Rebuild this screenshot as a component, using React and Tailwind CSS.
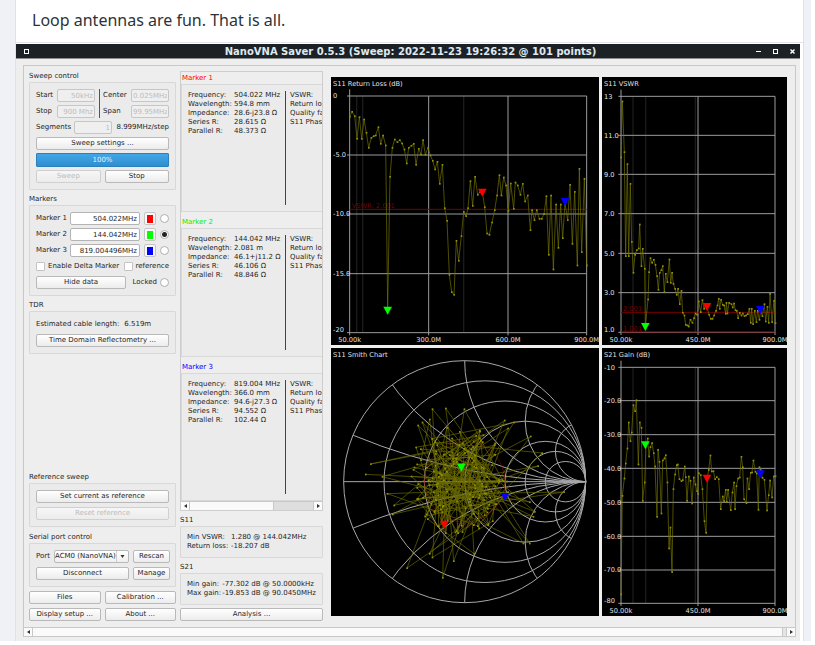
import React from "react";

function Button({ children, className = "", ...rest }) {
  return (
    <button
      className={`flex h-[13px] items-center justify-center rounded-[2px] border border-[#b9b9b9] bg-gradient-to-b from-white to-[#ececec] whitespace-nowrap disabled:border-[#d0d0d0] disabled:from-[#f6f6f6] disabled:text-[#bcbcbc] ${className}`}
      {...rest}
    >
      {children}
    </button>
  );
}

function Field({ className = "", ...rest }) {
  return (
    <input
      type="text"
      className={`h-[13px] w-full min-w-0 rounded-[2px] border border-[#b4b4b4] bg-white px-[2px] text-right disabled:border-[#c6c6c6] disabled:bg-[#efefef] disabled:px-px disabled:text-[#bcbcbc] ${className}`}
      {...rest}
    />
  );
}

function Radio(props) {
  return (
    <input
      type="radio"
      className="size-[9px] shrink-0 appearance-none rounded-full border border-[#b0b0b0] bg-white checked:bg-[radial-gradient(circle,#222_0_2px,#fff_3px)]"
      {...props}
    />
  );
}

function Check(props) {
  return (
    <input
      type="checkbox"
      className="size-[9px] shrink-0 appearance-none rounded-[1px] border border-[#c4c4c4] bg-white checked:bg-[#333]"
      {...props}
    />
  );
}

function Group({ title, titleClass = "", className = "", children }) {
  return (
    <section className="flex flex-col">
      <h2 className={`h-3 leading-3 ${titleClass}`}>{title}</h2>
      <div className={`flex flex-col gap-[3px] rounded-[1px] border border-[#d8d8d8] bg-[#ebebeb] p-[6px] ${className}`}>
        {children}
      </div>
    </section>
  );
}

const markers = [
  { id: 1, freq: "504.022MHz", chip: "bg-[#ff0000]", title: "text-[#ff0000]",
    rows: [["Frequency:", "504.022 MHz"], ["Wavelength:", "594.8 mm"], ["Impedance:", "28.6-j23.8 Ω"], ["Series R:", "28.615 Ω"], ["Parallel R:", "48.373 Ω"]] },
  { id: 2, freq: "144.042MHz", chip: "bg-[#00ff00]", title: "text-[#00f000]",
    rows: [["Frequency:", "144.042 MHz"], ["Wavelength:", "2.081 m"], ["Impedance:", "46.1+j11.2 Ω"], ["Series R:", "46.106 Ω"], ["Parallel R:", "48.846 Ω"]] },
  { id: 3, freq: "819.004496MHz", chip: "bg-[#0000ff]", title: "text-[#0000ff]",
    rows: [["Frequency:", "819.004 MHz"], ["Wavelength:", "366.0 mm"], ["Impedance:", "94.6-j27.3 Ω"], ["Series R:", "94.552 Ω"], ["Parallel R:", "102.44 Ω"]] },
];

function Controls() {
  return (
    <div className="flex w-[147px] shrink-0 flex-col justify-between">
      <div className="flex flex-col gap-[3px]">
        <Group title="Sweep control">
          <div className="grid grid-cols-[21px_1fr_8px_28px_1fr] items-center gap-y-[3px]">
            <label htmlFor="start">Start</label>
            <Field id="start" defaultValue="50kHz" disabled />
            <span className="row-span-2 w-px justify-self-center self-stretch bg-[#555]" />
            <label htmlFor="center">Center</label>
            <Field id="center" defaultValue="0.025MHz" disabled />
            <label htmlFor="stop">Stop</label>
            <Field id="stop" defaultValue="900 Mhz" disabled />
            <label htmlFor="span">Span</label>
            <Field id="span" defaultValue="99.95MHz" disabled />
          </div>
          <div className="flex items-center justify-between">
            <label htmlFor="segments" className="w-[38px]">Segments</label>
            <div className="w-[38px]"><Field id="segments" defaultValue="1" disabled /></div>
            <span className="flex w-[57px] justify-end whitespace-nowrap">8.999MHz/step</span>
          </div>
          <Button>Sweep settings ...</Button>
          <div role="progressbar" aria-label="Sweep progress" aria-valuenow={100} className="flex h-[14px] items-center justify-center rounded-[1px] border border-[#2a7fbd] bg-gradient-to-b from-[#42a6e6] to-[#2e8fd0] text-[#e4f2fc]">
            100%
          </div>
          <div className="grid grid-cols-2 gap-1">
            <Button disabled>Sweep</Button>
            <Button>Stop</Button>
          </div>
        </Group>

        <Group title="Markers">
          {markers.map((m) => (
            <div key={m.id} className="flex items-center gap-1">
              <label htmlFor={`marker-${m.id}`} className="w-[30px] shrink-0 whitespace-nowrap">Marker {m.id}</label>
              <Field id={`marker-${m.id}`} defaultValue={m.freq} />
              <button aria-label={`Marker ${m.id} colour`} className="flex h-[13px] w-[12px] shrink-0 items-center justify-center rounded-[2px] border border-[#c4c4c4] bg-[#f8f8f8]">
                <span className={`h-[8px] w-[6px] ${m.chip}`} />
              </button>
              <Radio name="active-marker" aria-label={`Select marker ${m.id}`} defaultChecked={m.id === 2} />
            </div>
          ))}
          <div className="flex h-[13px] items-center justify-between">
            <label className="flex items-center gap-[3px] whitespace-nowrap"><Check />Enable Delta Marker</label>
            <label className="flex items-center gap-[3px]"><Check />reference</label>
          </div>
          <div className="flex items-center justify-between">
            <Button className="w-[90px]">Hide data</Button>
            <label className="flex items-center gap-[3px]">Locked<Radio name="locked" /></label>
          </div>
        </Group>

        <Group title="TDR">
          <p className="flex h-[13px] items-center gap-[5px]"><span>Estimated cable length:</span><span>6.519m</span></p>
          <Button>Time Domain Reflectometry ...</Button>
        </Group>
      </div>

      <div className="flex flex-col gap-1">
        <Group title="Reference sweep">
          <div className="grid gap-1">
            <Button>Set current as reference</Button>
            <Button disabled>Reset reference</Button>
          </div>
        </Group>
        <Group title="Serial port control">
          <div className="grid grid-cols-[14px_1fr_37px] items-center gap-1">
            <label htmlFor="port">Port</label>
            <div className="flex h-[13px] items-center rounded-[2px] border border-[#b9b9b9] bg-gradient-to-b from-white to-[#efefef]">
              <select id="port" className="min-w-0 flex-1 appearance-none bg-transparent leading-[11px]">
                <option>ACM0 (NanoVNA)</option>
              </select>
              <span className="flex h-full w-3 items-center justify-center border-l border-[#cfcfcf]">
                <svg viewBox="0 0 4 3" className="h-[3px] w-[5px]"><path d="M0 0H4L2 3Z" fill="#333" /></svg>
              </span>
            </div>
            <Button>Rescan</Button>
            <Button className="col-span-2">Disconnect</Button>
            <Button>Manage</Button>
          </div>
        </Group>
        <div className="grid grid-cols-2 gap-1">
          <Button>Files</Button>
          <Button>Calibration ...</Button>
          <Button>Display setup ...</Button>
          <Button>About ...</Button>
        </div>
      </div>
    </div>
  );
}

function Arrow({ left }) {
  return (
    <button aria-label={left ? "Scroll left" : "Scroll right"} className={`flex w-[9px] shrink-0 items-center justify-center border-[#c8c8c8] bg-[#fbfbfb] ${left ? "border-r" : "border-l"}`}>
      <svg viewBox="0 0 3 4" className="h-[4px] w-[3px]"><path d={left ? "M3 0V4L0 2Z" : "M0 0V4L3 2Z"} fill="#333" /></svg>
    </button>
  );
}

function Readout({ rows, col }) {
  return (
    <table className="leading-[9px] whitespace-nowrap">
      <tbody>
        {rows.map(([k, v]) => (
          <tr key={k}><th scope="row" className={`p-0 text-left font-normal ${col}`}>{k}</th><td className="p-0">{v}</td></tr>
        ))}
      </tbody>
    </table>
  );
}

function MarkerPanel() {
  return (
    <div className="flex w-[143px] shrink-0 flex-col gap-[3px] pt-px">
      <div className="flex flex-1 flex-col overflow-hidden border border-[#cdcdcd]">
        <div className="flex flex-1 flex-col gap-1">
          {markers.map((m) => (
            <section key={m.id} className="flex flex-1 flex-col">
              <h2 className={`h-3 pl-px leading-3 ${m.title}`}>Marker {m.id}</h2>
              <div className="flex flex-1 overflow-hidden border-y border-l border-[#d8d8d8] bg-[#ebebeb] py-[6px] pl-[6px] leading-[9px] whitespace-nowrap">
                <table className="w-[97px] shrink-0 self-start">
                  <tbody>
                    {m.rows.map(([k, v]) => (
                      <tr key={k}><th scope="row" className="w-[46px] p-0 text-left font-normal">{k}</th><td className="p-0">{v}</td></tr>
                    ))}
                  </tbody>
                </table>
                <span className="mr-1 w-px shrink-0 bg-[#444]" />
                <div>
                  <p>VSWR:</p><p>Return loss:</p><p>Quality factor:</p><p>S11 Phase:</p>
                </div>
              </div>
            </section>
          ))}
        </div>
        <div className="flex h-[9px] shrink-0 border-t border-[#c8c8c8] bg-[#dedede]">
          <Arrow left />
          <div className="w-[84px] border-r border-[#c8c8c8] bg-[#fafafa]" />
          <div className="flex-1" />
          <Arrow />
        </div>
      </div>
      <Group title="S11">
        <Readout rows={[["Min VSWR:", "1.280 @ 144.042MHz"], ["Return loss:", "-18.207 dB"]]} col="w-[44px]" />
      </Group>
      <Group title="S21">
        <Readout rows={[["Min gain:", "-77.302 dB @ 50.0000kHz"], ["Max gain:", "-19.853 dB @ 90.0450MHz"]]} col="w-[38px]" />
      </Group>
      <Button>Analysis ...</Button>
    </div>
  );
}

const returnLoss = "65,124 72,109 80,122 87,190 94,125 101,190 108,132 115,172 122,217 130,187 137,182 143,180 151,155 158,205 165,180 173,210 179,700 186,304 193,217 200,192 208,200 215,194 222,204 229,222 236,264 242,217 250,211 257,205 264,268 272,220 279,237 285,194 292,238 300,217 307,240 314,256 321,282 328,259 335,325 343,268 350,398 357,436 364,598 371,650 378,658 385,496 392,556 400,482 407,409 414,422 420,398 427,317 434,391 441,304 449,358 456,350 463,350 470,395 477,474 484,478 492,441 500,404 507,360 514,299 520,360 527,306 534,330 541,406 548,324 557,400 562,321 569,330 577,358 584,325 591,378 599,360 607,464 612,404 619,434 626,404 634,430 641,430 648,416 655,362 662,538 669,360 676,582 684,387 691,517 698,387 704,488 711,385 719,434 726,328 733,505 740,349 748,570 754,280 761,530 769,310 776,570";
const vswr = "69,246 73,78 79,230 83,542 88,266 92,542 97,325 101,499 106,592 111,538 116,524 122,519 125,447 130,572 134,520 140,580 142,755 150,672 153,590 157,548 162,562 167,553 172,568 177,602 181,643 185,592 190,584 194,572 199,650 203,595 208,620 214,552 218,622 222,592 226,625 231,640 236,658 240,640 245,686 250,646 254,712 259,720 263,748 268,750 272,753 277,733 283,742 288,728 292,714 297,718 302,678 308,710 313,674 318,700 322,690 327,695 333,718 338,730 343,730 348,720 354,706 358,690 362,670 365,700 369,673 374,688 378,690 383,715 385,682 388,714 393,682 400,686 404,696 408,684 412,704 416,706 420,728 425,712 430,720 434,714 439,722 444,720 449,716 454,700 458,742 461,700 465,746 470,706 475,740 479,706 484,733 488,706 493,722 499,686 503,738 508,694 512,742 516,655 522,740 528,676 532,743";
const gain = "69,748 73,452 79,400 83,355 88,310 92,232 97,288 101,262 106,180 111,198 115,165 121,358 125,232 130,248 134,467 140,412 144,300 149,280 153,334 157,306 162,294 167,324 171,364 177,515 180,314 184,350 190,505 194,346 199,340 203,330 208,412 213,610 217,547 222,681 226,432 231,388 236,360 239,358 244,402 250,408 254,405 260,364 263,396 267,467 272,394 277,407 282,475 287,397 292,418 297,438 300,446 302,384 308,390 313,432 319,528 324,563 328,400 332,374 337,331 341,379 346,378 351,402 356,396 362,402 368,492 374,454 378,468 383,434 386,470 390,434 398,495 403,442 408,412 411,492 415,423 420,400 425,397 430,335 434,366 438,462 445,474 448,400 453,432 458,383 462,382 466,346 472,380 476,385 481,494 484,366 488,375 493,398 499,404 507,496 512,450 516,406 522,457 527,394 532,393";

function Trace({ points, line = "#767600", width = 2 }) {
  return (
    <g>
      <polyline points={points} fill="none" stroke={line} strokeWidth={width} />
      {points.split(" ").map((p, i) => {
        const [x, y] = p.split(",").map(Number);
        return <rect key={i} x={x - 2} y={y - 2} width="5" height="5" fill="#929200" />;
      })}
    </g>
  );
}

function Tip({ x, y, color }) {
  return <path d={`M${x - 13} ${y - 24}h26l-13 24z`} fill={color} />;
}

function Chart({ title, box, left, ys, xs, bands, points, tips, children }) {
  const [bx, by] = box.split(" ").map(Number);
  const top = ys[0][0];
  const bottom = ys[ys.length - 1][0];
  const right = xs[xs.length - 1][0];
  return (
    <svg viewBox={box} className="block h-auto w-full bg-black font-['DejaVu_Sans',sans-serif] text-[20px]" role="img" aria-label={title}>
      {bands.map((x) => <path key={x} d={`M${x} ${top}V${bottom}`} stroke="#1b1b1b" strokeWidth="4" />)}
      <g stroke="#9c9c9e" strokeWidth="3">
        {ys.map(([y]) => <path key={y} d={`M${left - 8} ${y}H${right}`} />)}
        {xs.map(([x], i) => <path key={x} d={`M${x} ${i === 0 ? top - 20 : top}V${bottom + 8}`} />)}
      </g>
      {children}
      <Trace points={points} />
      {tips.map((t) => <Tip key={t[2]} x={t[0]} y={t[1]} color={t[2]} />)}
      <g fill="#e4e4e4">
        <text x={bx + 6} y={by + 27}>{title}</text>
        {ys.map(([y, label], i) => <text key={label} x={bx + 6} y={i === ys.length - 1 ? y - 1 : y + 7}>{label}</text>)}
        {xs.map(([x, label]) => <text key={label} x={x} y={bottom + 28} textAnchor="middle">{label}</text>)}
      </g>
    </svg>
  );
}

const outliers = [[113, 388], [237, 669], [620, 500], [344, 698], [313, 400], [128, 357], [455, 280], [178, 446], [530, 226], [194, 508], [708, 441], [480, 540], [586, 595], [455, 256], [605, 595], [409, 192], [313, 637], [313, 192], [500, 300], [642, 324], [198, 481], [608, 274], [163, 395], [377, 648], [353, 190], [438, 626], [558, 232], [305, 626], [270, 241], [630, 363], [264, 307], [605, 471], [283, 232], [616, 515], [305, 223], [540, 250]];

function smithPoints() {
  let seed = 29;
  const rnd = () => (seed = (seed * 16807) % 2147483647) / 2147483647;
  const out = [];
  for (let i = 0; i < 144; i += 1) {
    if (i % 4 === 0 && i / 4 < outliers.length) out.push(outliers[i / 4].join(","));
    const a = i * 2.1 + rnd() * 2.4;
    const r = 45 + rnd() * 105;
    out.push(`${Math.round(396 + r * Math.cos(a))},${Math.round(408 + r * 1.12 * Math.sin(a))}`);
  }
  return out.join(" ");
}
const smith = smithPoints();

function SmithChart() {
  const R = 363;
  const c = 410;
  const e = c + R;
  return (
    <svg viewBox="9 9 804 804" className="block h-auto w-full bg-black font-['DejaVu_Sans',sans-serif] text-[20px]" role="img" aria-label="S11 Smith Chart">
      <clipPath id="unit"><circle cx={c} cy={c} r={R} /></clipPath>
      <g fill="none" stroke="#a8a8aa" strokeWidth="3">
        <circle cx={c} cy={c} r={R} />
        <path d={`M${c - R} ${c}H${e}`} />
        {[0.2, 0.5, 1, 2, 3, 5].map((r) => <circle key={r} cx={e - R / (1 + r)} cy={c} r={R / (1 + r)} />)}
        <g clipPath="url(#unit)">
          {[0.2, 0.5, 1, 2, 4].map((x) => (
            <g key={x}>
              <circle cx={e} cy={c - R / x} r={R / x} />
              <circle cx={e} cy={c + R / x} r={R / x} />
            </g>
          ))}
        </g>
      </g>
      <circle cx={c} cy={c} r="121" fill="none" stroke="#7a0000" strokeWidth="2" />
      <g fill="#780000">
        <text x="383" y="430">1.001</text>
        <text x="383" y="549">2.001</text>
      </g>
      <Trace points={smith} line="#6c6c00" />
      <Tip x={400} y={380} color="#00ff00" />
      <Tip x={349} y={551} color="#ff0000" />
      <Tip x={531} y={468} color="#0000ff" />
      <text x="15" y="37" fill="#e4e4e4">S11 Smith Chart</text>
    </svg>
  );
}

function Charts() {
  return (
    <div className="grid min-w-0 flex-1 grid-cols-[268fr_185fr] content-start gap-[3px] pt-[7px]">
      <Chart title="S11 Return Loss (dB)" box="9 5 804 804" left={65} points={returnLoss}
        ys={[[62, "0"], [239, "-5.0"], [416, "-10.0"], [595, "-15.0"], [772, "-20"]]}
        xs={[[65, "50.00k"], [302, "300.0M"], [540, "600.0M"], [776, "900.0M"]]}
        bands={[86, 104, 407]}
        tips={[[463, 364, "#ff0000"], [179, 718, "#00ff00"], [711, 392, "#0000ff"]]}>
        <path d="M65 402H776" stroke="#780000" strokeWidth="3" />
        <text x="71" y="399" fill="#780000">VSWR: 2.001</text>
      </Chart>
      <Chart title="S11 VSWR" box="12 5 555 804" left={69} points={vswr}
        ys={[[63, "13"], [180, "11.0"], [297, "9.0"], [415, "7.0"], [534, "5.0"], [652, "3.0"], [771, "1.0"]]}
        xs={[[69, "50.00k"], [300, "450.0M"], [531, "900.0M"]]}
        bands={[105, 143, 292]}
        tips={[[327, 707, "#ff0000"], [142, 767, "#00ff00"], [487, 716, "#0000ff"]]}>
        <path d="M69 711H531M69 770H531" stroke="#780000" strokeWidth="3" />
        <text x="75" y="708" fill="#780000">2.001</text>
        <text x="75" y="767" fill="#780000">1.001</text>
      </Chart>
      <SmithChart />
      <Chart title="S21 Gain (dB)" box="12 9 555 804" left={69} points={gain}
        ys={[[67, "-10"], [167, "-20.0"], [269, "-30.0"], [370, "-40.0"], [472, "-50.0"], [574, "-60.0"], [675, "-70.0"], [775, "-80"]]}
        xs={[[69, "50.00k"], [300, "450.0M"], [531, "900.0M"]]}
        bands={[105, 143, 292]}
        tips={[[327, 413, "#ff0000"], [142, 313, "#00ff00"], [487, 400, "#0000ff"]]} />
    </div>
  );
}

export default function App() {
  return (
    <div className="flex min-h-screen flex-col bg-white pr-1 pb-1">
      <div className="flex flex-1 bg-[#eff1f6] pr-[7px] pl-[15px]">
        <article className="flex min-w-0 flex-1 flex-col border-x border-[#dfe1e6] bg-white pr-[3px]">
          <p className="h-[42px] pt-[7px] pl-4 font-['Noto_Sans',sans-serif] text-[16px] leading-[26px] text-[#2c3338]">
            Loop antennas are fun. That is all.
          </p>
          <div className="-mr-[3px] mb-px h-px bg-[#e3e4e8]" />
          <div className="flex flex-1 flex-col font-['DejaVu_Sans',sans-serif] text-[7px] text-[#1e1e1e]">
            <header className="flex h-[15px] items-center justify-between border-b border-[#8a8c8e] bg-[#1c2126] pr-[5px] pl-2 text-[#dfe8ef]">
              <button aria-label="Window menu" className="size-[5px] border border-white" />
              <h1 className="flex-1 pl-9 text-center text-[10px] leading-[13px] font-bold">
                NanoVNA Saver 0.5.3 (Sweep: 2022-11-23 19:26:32 @ 101 points)
              </h1>
              <div className="flex items-center gap-3">
                <button aria-label="Minimise" className="h-px w-[5px] bg-white" />
                <button aria-label="Maximise" className="size-[5px] border border-white" />
                <button aria-label="Close">
                  <svg viewBox="0 0 5 5" className="block size-[5px]"><path d="M0.5 0.5L4.5 4.5M4.5 0.5L0.5 4.5" stroke="#fff" strokeWidth="1.4" /></svg>
                </button>
              </div>
            </header>
            <main className="flex flex-1 flex-col bg-[#eeeeee] pt-[6px] pr-1 pb-1 pl-[7px]">
              <div className="flex flex-1 flex-col border border-[#c8c8c8]">
                <div className="flex flex-1 pt-1 pr-2 pb-[6px] pl-[5px]">
                  <Controls />
                  <div className="w-1 shrink-0" />
                  <MarkerPanel />
                  <div className="w-2 shrink-0" />
                  <Charts />
                </div>
                <div className="flex h-[9px] border-t border-[#c8c8c8] bg-[#e4e4e4]">
                  <Arrow left />
                  <div className="flex-1 border-r border-[#c8c8c8] bg-[#fafafa]" />
                  <div className="w-[3px]" />
                  <Arrow />
                </div>
              </div>
            </main>
          </div>
        </article>
      </div>
    </div>
  );
}
